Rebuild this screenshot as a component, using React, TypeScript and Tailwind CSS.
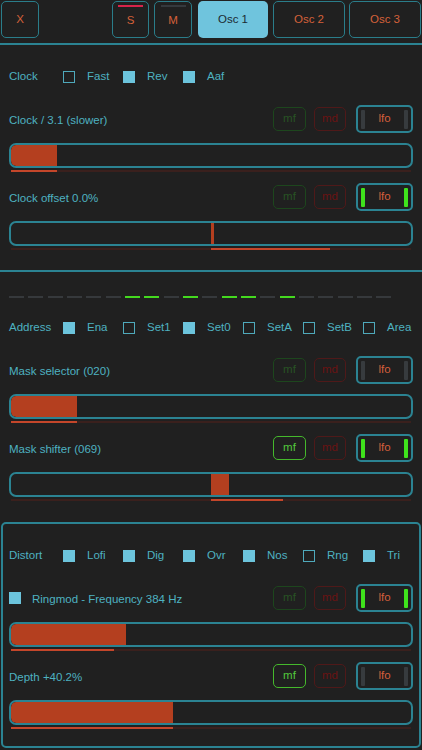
import React from 'react';

const dashes = [0, 0, 0, 0, 0, 0, 1, 1, 0, 1, 0, 1, 1, 0, 1, 0, 0, 0, 0, 0];

const Check = ({ on }: { on: boolean }) =>
  on ? (
    <span className="w-[12px] h-[12px] shrink-0 bg-[#6cc4dc]" />
  ) : (
    <span className="w-[12px] h-[12px] shrink-0 border-[1.5px] border-[#4fa9bb]" />
  );

const Option = ({ label, on }: { label: string; on: boolean }) => (
  <div className="w-[60px] flex items-center shrink-0">
    <Check on={on} />
    <span className="ml-[12px]">{label}</span>
  </div>
);

const OptionRow = ({ title, options }: { title: string; options: [string, boolean][] }) => (
  <div className="h-[24px] flex items-center">
    <span className="w-[54px] shrink-0">{title}</span>
    {options.map(([l, on]) => (
      <Option key={l} label={l} on={on} />
    ))}
  </div>
);

interface ParamProps {
  label: string;
  mf?: boolean;
  lfo?: boolean;
  check?: boolean;
  fill: number;
  line: number;
  center?: boolean;
}

const Param: React.FC<ParamProps> = ({ label, mf = false, lfo = false, check = false, fill, line, center = false }) => (
  <div>
    <div className="h-[28px] flex items-center">
      {check && <span className="w-[12px] h-[12px] bg-[#6cc4dc] mr-[11px] shrink-0" />}
      <span className="flex-1 mt-[3px]">{label}</span>
      <div
        className={
          mf
            ? 'w-[33px] h-[24px] rounded-[5px] border-[1.5px] border-[#45b82c] text-[#52c83c] flex items-center justify-center'
            : 'w-[33px] h-[24px] rounded-[5px] border-[1.5px] border-[#1d461d] text-[#285324] flex items-center justify-center'
        }
      >
        mf
      </div>
      <div className="ml-[8px] w-[32px] h-[24px] rounded-[5px] border-[1.5px] border-[#4f1919] text-[#6a1313] flex items-center justify-center">
        md
      </div>
      <div className="ml-[10px] w-[57px] h-[28px] rounded-[5px] border-2 border-[#2b8392] flex items-center justify-between px-[3px]">
        <span className={lfo ? 'w-[4px] h-[19px] rounded-[1px] bg-[#3fe21c]' : 'w-[4px] h-[19px] rounded-[1px] bg-[#373b3e]'} />
        <span className="text-[#d55f3b]">lfo</span>
        <span className={lfo ? 'w-[4px] h-[19px] rounded-[1px] bg-[#3fe21c]' : 'w-[4px] h-[19px] rounded-[1px] bg-[#373b3e]'} />
      </div>
    </div>
    <div className="mt-[10px] h-[25px] rounded-[7px] border-2 border-[#2b8392] flex overflow-hidden">
      {center ? (
        <div className="ml-[200px] h-full bg-[#b43f1f]" style={{ width: fill }} />
      ) : (
        <div className="h-full rounded-l-[5px] bg-[#b43f1f]" style={{ width: fill }} />
      )}
    </div>
    <div className="mt-[2px] mx-[2px] h-[2px] bg-[#3a201d] flex">
      {center ? (
        <div className="ml-[200px] h-full bg-[#c4462a]" style={{ width: line }} />
      ) : (
        <div className="h-full bg-[#c4462a]" style={{ width: line }} />
      )}
    </div>
  </div>
);

export default function App() {
  return (
    <div className="w-[422px] h-[750px] bg-[#202020] text-[#4eb2c0] text-[11.5px] font-['Liberation_Sans',Arial,sans-serif] overflow-hidden">
      {/* top tabs */}
      <div className="h-[45px] border-b-2 border-[#2b8392] flex items-start">
        <div className="mt-[1px] ml-[1px] w-[38px] h-[37px] rounded-[5px] border-[1.5px] border-[#2a7d8a] text-[#d5603a] flex items-center justify-center">
          X
        </div>
        <div className="mt-[1px] ml-[73px] w-[37px] h-[37px] rounded-[5px] border-[1.5px] border-[#2a7d8a] text-[#d5603a] flex flex-col items-center">
          <span className="mt-[3px] w-[25px] h-[2px] bg-[#d7244b]" />
          <span className="mt-[5px]">S</span>
        </div>
        <div className="mt-[1px] ml-[5px] w-[38px] h-[37px] rounded-[5px] border-[1.5px] border-[#2a7d8a] text-[#d5603a] flex flex-col items-center">
          <span className="mt-[3px] w-[25px] h-[2px] bg-[#35393d]" />
          <span className="mt-[5px]">M</span>
        </div>
        <div className="mt-[1px] ml-[6px] w-[70px] h-[37px] rounded-[5px] bg-[#6fc4dd] text-[#1b2a31] flex items-center justify-center">
          Osc 1
        </div>
        <div className="mt-[1px] ml-[5px] w-[72px] h-[37px] rounded-[5px] border-[1.5px] border-[#2a7d8a] text-[#d5603a] flex items-center justify-center">
          Osc 2
        </div>
        <div className="mt-[1px] ml-[4px] w-[72px] h-[37px] rounded-[5px] border-[1.5px] border-[#2a7d8a] text-[#d5603a] flex items-center justify-center">
          Osc 3
        </div>
      </div>

      {/* clock section */}
      <div className="px-[9px] pt-[20px] pb-[20px] border-b-2 border-[#2b8392]">
        <OptionRow title="Clock" options={[['Fast', false], ['Rev', true], ['Aaf', true]]} />
        <div className="mt-[16px]">
          <Param label="Clock / 3.1 (slower)" fill={46} line={46} />
        </div>
        <div className="mt-[11px]">
          <Param label="Clock offset 0.0%" lfo fill={3} line={119} center />
        </div>
      </div>

      {/* address section */}
      <div className="px-[9px] pt-[24px]">
        <div className="flex gap-[4.33px]">
          {dashes.map((d, i) => (
            <span key={i} className={d ? 'w-[15px] h-[2px] bg-[#44d91f]' : 'w-[15px] h-[2px] bg-[#36393c]'} />
          ))}
        </div>
        <div className="mt-[18px]">
          <OptionRow
            title="Address"
            options={[['Ena', true], ['Set1', false], ['Set0', true], ['SetA', false], ['SetB', false], ['Area', false]]}
          />
        </div>
        <div className="mt-[16px]">
          <Param label="Mask selector (020)" fill={66} line={66} />
        </div>
        <div className="mt-[11px]">
          <Param label="Mask shifter (069)" mf lfo fill={18} line={72} center />
        </div>
      </div>

      {/* distort section */}
      <div className="mt-[21px] mx-[1px] rounded-[5px] border-2 border-[#2b8392] px-[6px] pt-[20px] pb-[17px]">
        <OptionRow
          title="Distort"
          options={[['Lofi', true], ['Dig', true], ['Ovr', true], ['Nos', true], ['Rng', false], ['Tri', true]]}
        />
        <div className="mt-[16px]">
          <Param label="Ringmod - Frequency 384 Hz" check lfo fill={115} line={103} />
        </div>
        <div className="mt-[11px]">
          <Param label="Depth +40.2%" mf fill={162} line={162} />
        </div>
      </div>
    </div>
  );
}
